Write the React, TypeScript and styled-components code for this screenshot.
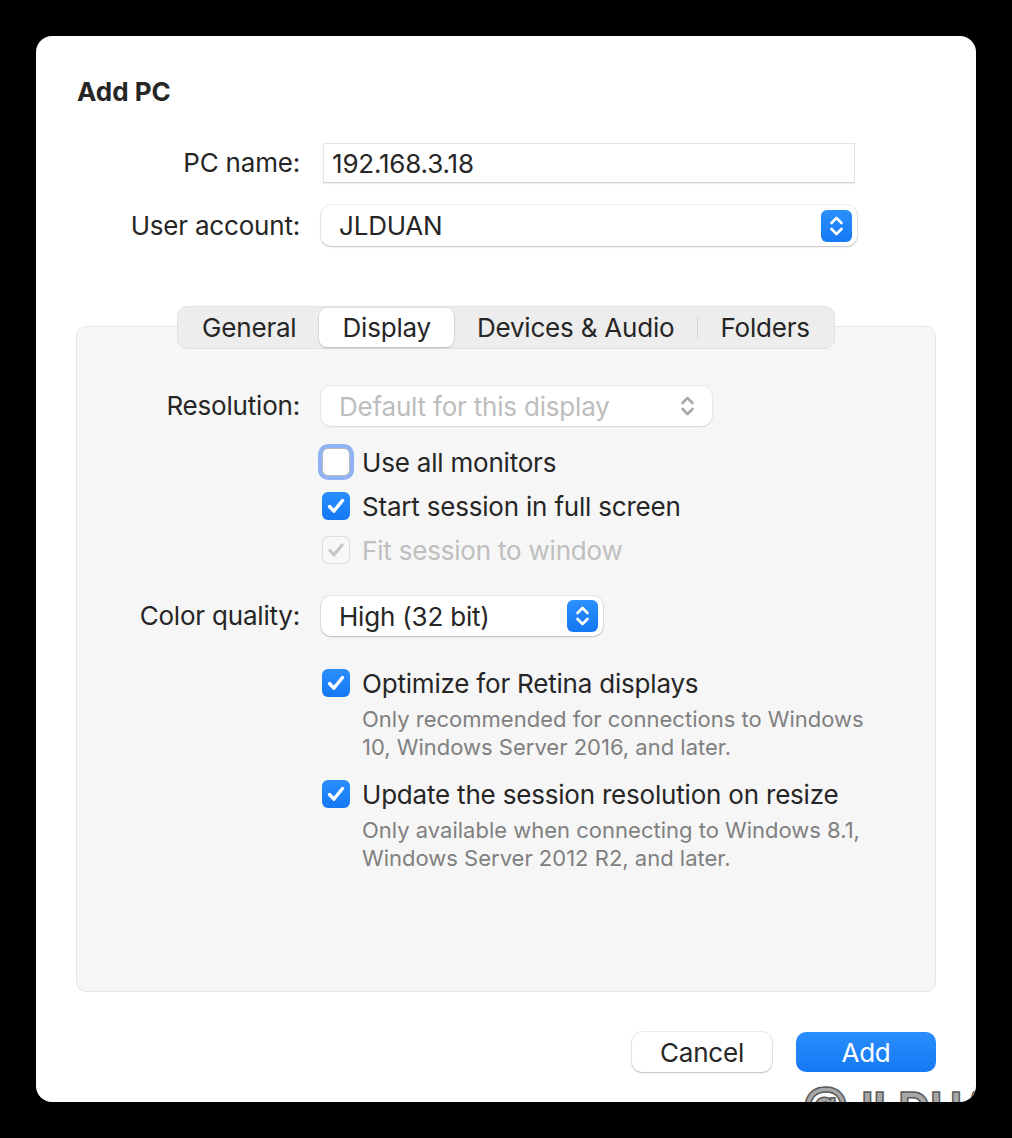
import React from "react";
import styled, { createGlobalStyle, css } from "styled-components";

const GlobalStyle = createGlobalStyle`
  html, body { margin: 0; padding: 0; background: #000; }
  body {
    font-family: Inter, "Noto Sans", "Liberation Sans", sans-serif;
    -webkit-font-smoothing: antialiased;
  }
`;

const Page = styled.div`
  width: 1012px;
  height: 1138px;
  padding: 36px;
  box-sizing: border-box;
  background: #000;
`;

const Dialog = styled.div`
  position: relative;
  width: 940px;
  height: 1066px;
  background: #fff;
  border-radius: 16px;
  overflow: hidden;
  box-sizing: border-box;
  padding: 40px 40px 30px;
  display: flex;
  flex-direction: column;
  color: #262626;
  letter-spacing: -0.2px;
`;

const Title = styled.h1`
  margin: 0;
  padding-left: 1px;
  font-size: 26px;
  line-height: 32px;
  font-weight: 700;
  letter-spacing: 0;
  color: #262626;
`;

const FormGrid = styled.div`
  display: grid;
  grid-template-columns: 224px 1fr;
  column-gap: 21px;
  row-gap: 22px;
  align-items: center;
  margin-top: 35px;
`;

const Label = styled.div`
  text-align: right;
  font-size: 26px;
  line-height: 32px;
  color: #262626;
`;

const TextField = styled.div`
  width: 532px;
  height: 40px;
  margin-left: 2px;
  box-sizing: border-box;
  padding: 0 8px;
  display: flex;
  align-items: center;
  font-size: 26px;
  background: #fff;
  border: 1px solid #e4e4e4;
  border-bottom-color: #d2d2d2;
  box-shadow: 0 1px 1px rgba(0, 0, 0, 0.06);
`;

const Popup = styled.div<{ $w: number; $h?: number; $disabled?: boolean }>`
  width: ${(p) => p.$w}px;
  height: ${(p) => p.$h ?? 40}px;
  box-sizing: border-box;
  padding: 0 5px 0 18px;
  display: flex;
  align-items: center;
  justify-content: space-between;
  border-radius: 10px;
  background: #fff;
  font-size: 26px;
  color: ${(p) => (p.$disabled ? "#bdbdbd" : "#262626")};
  box-shadow: 0 0 0 1px rgba(0, 0, 0, ${(p) => (p.$disabled ? 0.04 : 0.06)}),
    0 1px 2px rgba(0, 0, 0, ${(p) => (p.$disabled ? 0.08 : 0.2)});
`;

const Stepper = styled.span`
  width: 31px;
  height: 32px;
  border-radius: 6px;
  background: linear-gradient(#2b8ffc, #1479f4);
  display: flex;
  align-items: center;
  justify-content: center;
`;

const PlainStepper = styled.span`
  width: 31px;
  height: 32px;
  margin-right: 4px;
  display: flex;
  align-items: center;
  justify-content: center;
`;

const Chevrons = ({ color }: { color: string }) => (
  <svg width="31" height="32" viewBox="0 0 31 32" fill="none">
    <path d="M10.5 13 L15.5 8 L20.5 13" stroke={color} strokeWidth="2.6" strokeLinecap="round" strokeLinejoin="round" />
    <path d="M10.5 19 L15.5 24 L20.5 19" stroke={color} strokeWidth="2.6" strokeLinecap="round" strokeLinejoin="round" />
  </svg>
);

const TabView = styled.div`
  display: flex;
  flex-direction: column;
  flex: 1;
  margin-top: 60px;
`;

const TabBar = styled.div`
  align-self: center;
  position: relative;
  z-index: 1;
  display: flex;
  height: 43px;
  box-sizing: border-box;
  padding: 1px;
  margin-bottom: -23px;
  border-radius: 10px;
  background: #ededed;
  border: 1px solid #e2e2e2;
`;

const Tab = styled.div<{ $selected?: boolean; $divider?: boolean }>`
  position: relative;
  display: flex;
  align-items: center;
  padding: 0 23px;
  border-radius: 8px;
  font-size: 26px;
  color: #262626;
  ${(p) =>
    p.$selected &&
    css`
      background: #fff;
      box-shadow: 0 0 0 0.5px rgba(0, 0, 0, 0.08), 0 1px 2px rgba(0, 0, 0, 0.18);
    `}
  ${(p) =>
    p.$divider &&
    css`
      &::before {
        content: "";
        position: absolute;
        left: 0;
        top: 9px;
        bottom: 9px;
        width: 1px;
        background: #d4d4d4;
      }
    `}
`;

const Panel = styled.div`
  flex: 1;
  box-sizing: border-box;
  padding-top: 59px;
  background: #f6f6f6;
  border: 1px solid #e6e6e6;
  border-radius: 10px;
`;

const PanelGrid = styled.div`
  display: grid;
  grid-template-columns: 223px 1fr;
  column-gap: 21px;
  align-items: center;
`;

const Column = styled.div<{ $top: number }>`
  grid-column: 2;
  margin-top: ${(p) => p.$top}px;
  display: flex;
  flex-direction: column;
`;

const Spaced = styled.div<{ $top: number }>`
  margin-top: ${(p) => p.$top}px;
`;

const CheckRow = styled.div<{ $disabled?: boolean; $top?: number }>`
  height: 44px;
  margin-top: ${(p) => p.$top ?? 0}px;
  display: flex;
  align-items: center;
  gap: 12px;
  padding-left: 1px;
  font-size: 26px;
  color: ${(p) => (p.$disabled ? "#bfbfbf" : "#262626")};
`;

type BoxKind = "checked" | "focus" | "disabled";

const Box = styled.span<{ $kind: BoxKind }>`
  width: 28px;
  height: 28px;
  box-sizing: border-box;
  border-radius: 6px;
  display: flex;
  align-items: center;
  justify-content: center;
  flex-shrink: 0;
  ${(p) =>
    p.$kind === "checked" &&
    css`
      background: linear-gradient(#2a8efc, #1479f4);
    `}
  ${(p) =>
    p.$kind === "focus" &&
    css`
      background: #fff;
      border: 1px solid #b9b9b9;
      box-shadow: 0 0 0 4px #8fb3f4;
    `}
  ${(p) =>
    p.$kind === "disabled" &&
    css`
      background: #f7f7f7;
      border: 1px solid #dedede;
    `}
`;

const CheckMark = ({ color }: { color: string }) => (
  <svg width="28" height="28" viewBox="0 0 28 28" fill="none">
    <path d="M7.5 14.5 L11.8 19.2 L20.5 8.5" stroke={color} strokeWidth="3.4" strokeLinecap="round" strokeLinejoin="round" />
  </svg>
);

const Check = ({ kind, label, top }: { kind: BoxKind; label: string; top?: number }) => (
  <CheckRow $disabled={kind === "disabled"} $top={top}>
    <Box $kind={kind}>
      {kind === "checked" && <CheckMark color="#fff" />}
      {kind === "disabled" && <CheckMark color="#c6c6c6" />}
    </Box>
    <span>{label}</span>
  </CheckRow>
);

const Hint = styled.div`
  padding-left: 41px;
  font-size: 22px;
  line-height: 28px;
  letter-spacing: 0;
  color: #808080;
`;

const Footer = styled.div`
  display: flex;
  justify-content: flex-end;
  gap: 24px;
  margin-top: 40px;
`;

const Button = styled.button<{ $primary?: boolean }>`
  width: 140px;
  height: 40px;
  border-radius: 10px;
  font-family: inherit;
  font-size: 26px;
  letter-spacing: -0.2px;
  border: none;
  ${(p) =>
    p.$primary
      ? css`
          background: linear-gradient(#2a8efc, #1479f4);
          color: #fff;
        `
      : css`
          background: #fff;
          color: #262626;
          box-shadow: 0 0 0 1px rgba(0, 0, 0, 0.07), 0 1px 2px rgba(0, 0, 0, 0.2);
        `}
`;

const Watermark = styled.div`
  position: absolute;
  left: 767px;
  top: 1050px;
  font-size: 44px;
  line-height: 1;
  font-weight: 700;
  letter-spacing: 0;
  color: #a8a8a8;
  -webkit-text-stroke: 1.5px #5a5a5a;
  white-space: nowrap;
  pointer-events: none;
`;

export default function App() {
  return (
    <>
      <GlobalStyle />
      <Page>
        <Dialog>
          <Title>Add PC</Title>
          <FormGrid>
            <Label>PC name:</Label>
            <TextField>192.168.3.18</TextField>
            <Label>User account:</Label>
            <Popup $w={536} $h={41}>
              <span>JLDUAN</span>
              <Stepper>
                <Chevrons color="#fff" />
              </Stepper>
            </Popup>
          </FormGrid>
          <TabView>
            <TabBar>
              <Tab>General</Tab>
              <Tab $selected>Display</Tab>
              <Tab>Devices &amp; Audio</Tab>
              <Tab $divider>Folders</Tab>
            </TabBar>
            <Panel>
              <PanelGrid>
                <Label>Resolution:</Label>
                <Popup $w={391} $disabled>
                  <span>Default for this display</span>
                  <PlainStepper>
                    <Chevrons color="#a9a9a9" />
                  </PlainStepper>
                </Popup>
                <Column $top={14}>
                  <Check kind="focus" label="Use all monitors" />
                  <Check kind="checked" label="Start session in full screen" />
                  <Check kind="disabled" label="Fit session to window" />
                </Column>
                <Spaced $top={24}>
                  <Label>Color quality:</Label>
                </Spaced>
                <Spaced $top={24}>
                  <Popup $w={282}>
                    <span>High (32 bit)</span>
                    <Stepper>
                      <Chevrons color="#fff" />
                    </Stepper>
                  </Popup>
                </Spaced>
                <Column $top={25}>
                  <Check kind="checked" label="Optimize for Retina displays" />
                  <Hint>
                    Only recommended for connections to Windows
                    <br />
                    10, Windows Server 2016, and later.
                  </Hint>
                  <Check kind="checked" label="Update the session resolution on resize" top={11} />
                  <Hint>
                    Only available when connecting to Windows 8.1,
                    <br />
                    Windows Server 2012 R2, and later.
                  </Hint>
                </Column>
              </PanelGrid>
            </Panel>
          </TabView>
          <Footer>
            <Button>Cancel</Button>
            <Button $primary>Add</Button>
          </Footer>
          <Watermark>@JLDUAN</Watermark>
        </Dialog>
      </Page>
    </>
  );
}
